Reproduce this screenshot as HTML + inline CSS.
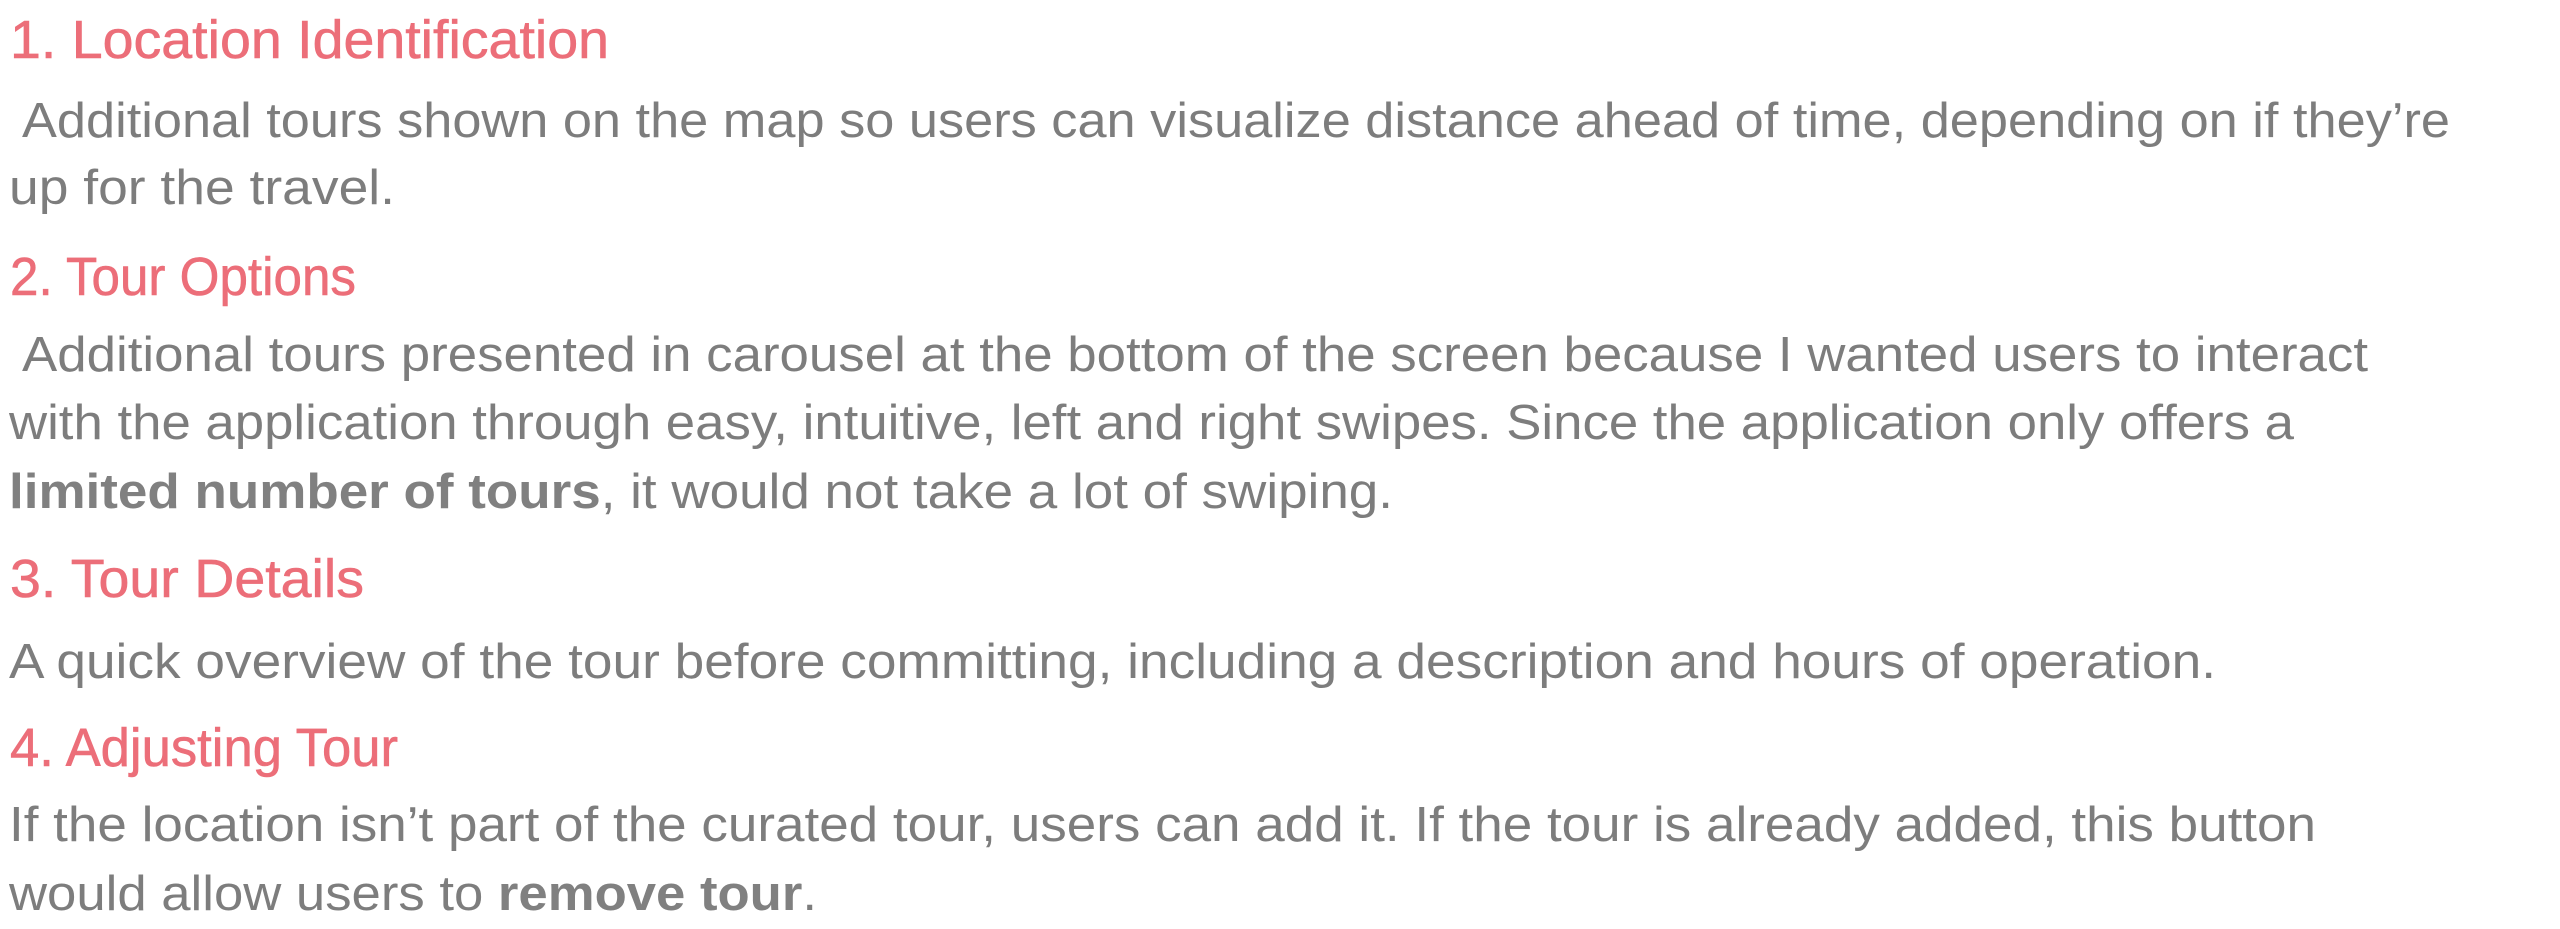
<!DOCTYPE html>
<html><head><meta charset="utf-8"><style>
html,body{margin:0;padding:0;background:#fff;width:2560px;height:929px;overflow:hidden}
svg{display:block}
.h{font-family:"Liberation Sans",sans-serif;font-size:54px;fill:#ec6e79;stroke:#ec6e79;stroke-width:0.6}
.b{font-family:"Liberation Sans",sans-serif;font-size:49px;fill:#7d7d7d}
.b tspan.s{font-weight:bold;fill:#808080}
</style></head><body>
<svg width="2560" height="929" xmlns="http://www.w3.org/2000/svg">
<text class="h" x="10" y="58" textLength="599" lengthAdjust="spacingAndGlyphs">1. Location Identification</text>
<text class="b" x="22" y="137" textLength="2428" lengthAdjust="spacingAndGlyphs">Additional tours shown on the map so users can visualize distance ahead of time, depending on if they’re</text>
<text class="b" x="9" y="204" textLength="386" lengthAdjust="spacingAndGlyphs">up for the travel.</text>
<text class="h" x="10" y="295" textLength="346" lengthAdjust="spacingAndGlyphs">2. Tour Options</text>
<text class="b" x="22" y="371" textLength="2346" lengthAdjust="spacingAndGlyphs">Additional tours presented in carousel at the bottom of the screen because I wanted users to interact</text>
<text class="b" x="9" y="439" textLength="2285" lengthAdjust="spacingAndGlyphs">with the application through easy, intuitive, left and right swipes. Since the application only offers a</text>
<text class="b" x="9" y="508" textLength="1384" lengthAdjust="spacingAndGlyphs"><tspan class="s">limited number of tours</tspan>, it would not take a lot of swiping.</text>
<text class="h" x="10" y="597" textLength="354" lengthAdjust="spacingAndGlyphs">3. Tour Details</text>
<text class="b" x="9" y="678" textLength="2207" lengthAdjust="spacingAndGlyphs">A quick overview of the tour before committing, including a description and hours of operation.</text>
<text class="h" x="10" y="766" textLength="388" lengthAdjust="spacingAndGlyphs">4. Adjusting Tour</text>
<text class="b" x="9" y="841" textLength="2307" lengthAdjust="spacingAndGlyphs">If the location isn’t part of the curated tour, users can add it. If the tour is already added, this button</text>
<text class="b" x="9" y="910" textLength="808" lengthAdjust="spacingAndGlyphs">would allow users to <tspan class="s">remove tour</tspan>.</text>
</svg>
</body></html>
